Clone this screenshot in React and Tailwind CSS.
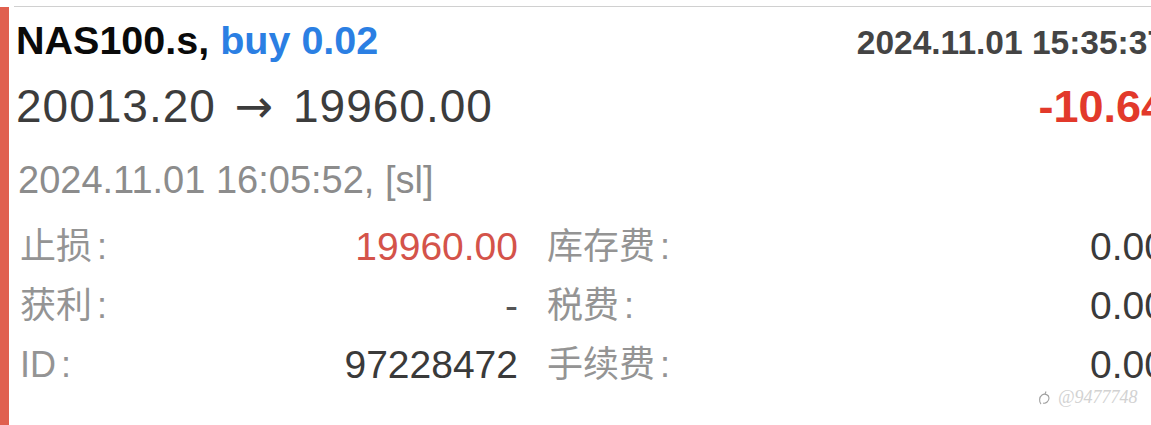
export default function App() {
  const rows = [
    { label: "止损", value: "19960.00", valueClass: "text-[#d4534a]", label2: "库存费", value2: "0.00" },
    { label: "获利", value: "-", valueClass: "text-[#555]", label2: "税费", value2: "0.00" },
    { label: "ID", value: "97228472", valueClass: "text-[#3a3a3a]", label2: "手续费", value2: "0.00" },
  ]

  return (
    <div className="relative w-[1151px] h-[425px] overflow-hidden bg-white flex font-['Liberation_Sans','Noto_Sans_CJK_SC',sans-serif]">
      {/* red side bar */}
      <div className="w-[9px] shrink-0 mt-[7px] bg-[#e0604f]" />

      <div className="ml-[5px] mt-[6px] w-[1152px] shrink-0 border-t border-[#d0d0d0] pl-[2px]">
        <div className="flex items-baseline justify-between pt-[14px]">
          <div className="text-[39.5px] leading-none font-bold text-[#0a0a0a]">
            NAS100.s, <span className="text-[#2b7fe3]">buy 0.02</span>
          </div>
          <div className="text-[33.5px] leading-none font-bold text-[#444]">2024.11.01 15:35:37</div>
        </div>

        <div className="flex items-baseline justify-between mt-[22px]">
          <div className="text-[46px] leading-none tracking-[1px] text-[#3c3c3c]">
            20013.20 <span className="mx-[5px] font-['DejaVu_Sans',sans-serif] text-[46px]">→</span> 19960.00
          </div>
          <div className="text-[45px] leading-none font-bold text-[#e2392b]">-10.64</div>
        </div>

        <div className="mt-[32px] pl-[2px] text-[38px] leading-none text-[#8c8c8c]">2024.11.01 16:05:52, [sl]</div>

        <div className="mt-[19px] pl-[4px]">
          {rows.map((r) => (
            <div key={r.label} className="flex items-center h-[59px]">
              <div className="w-[498px] flex items-center justify-between">
                <span className="text-[36px] text-[#949494]">
                  {r.label}
                  <span className="ml-[5px]">:</span>
                </span>
                <span className={`text-[39px] ${r.valueClass}`}>{r.value}</span>
              </div>
              <div className="ml-[29px] flex-1 flex items-center justify-between">
                <span className="text-[36px] text-[#949494]">
                  {r.label2}
                  <span className="ml-[5px]">:</span>
                </span>
                <span className="text-[39px] text-[#3a3a3a]">{r.value2}</span>
              </div>
            </div>
          ))}
        </div>
      </div>

      {/* watermark */}
      <div className="absolute left-[1038px] top-[384px] flex items-center gap-[7px] text-[18px] italic text-[#d2d2d2] font-['Liberation_Serif',serif]">
        <svg width="13" height="16" viewBox="0 0 13 16" fill="none" stroke="#a0a0a0" strokeWidth="1.1">
          <path d="M3 14 C1 12 1 7 4 5 C7 3 11 5 11 8 C11 11 8 14 5 13" />
          <path d="M7 4 L8 1.5" />
        </svg>
        <span>@9477748</span>
      </div>
    </div>
  )
}
